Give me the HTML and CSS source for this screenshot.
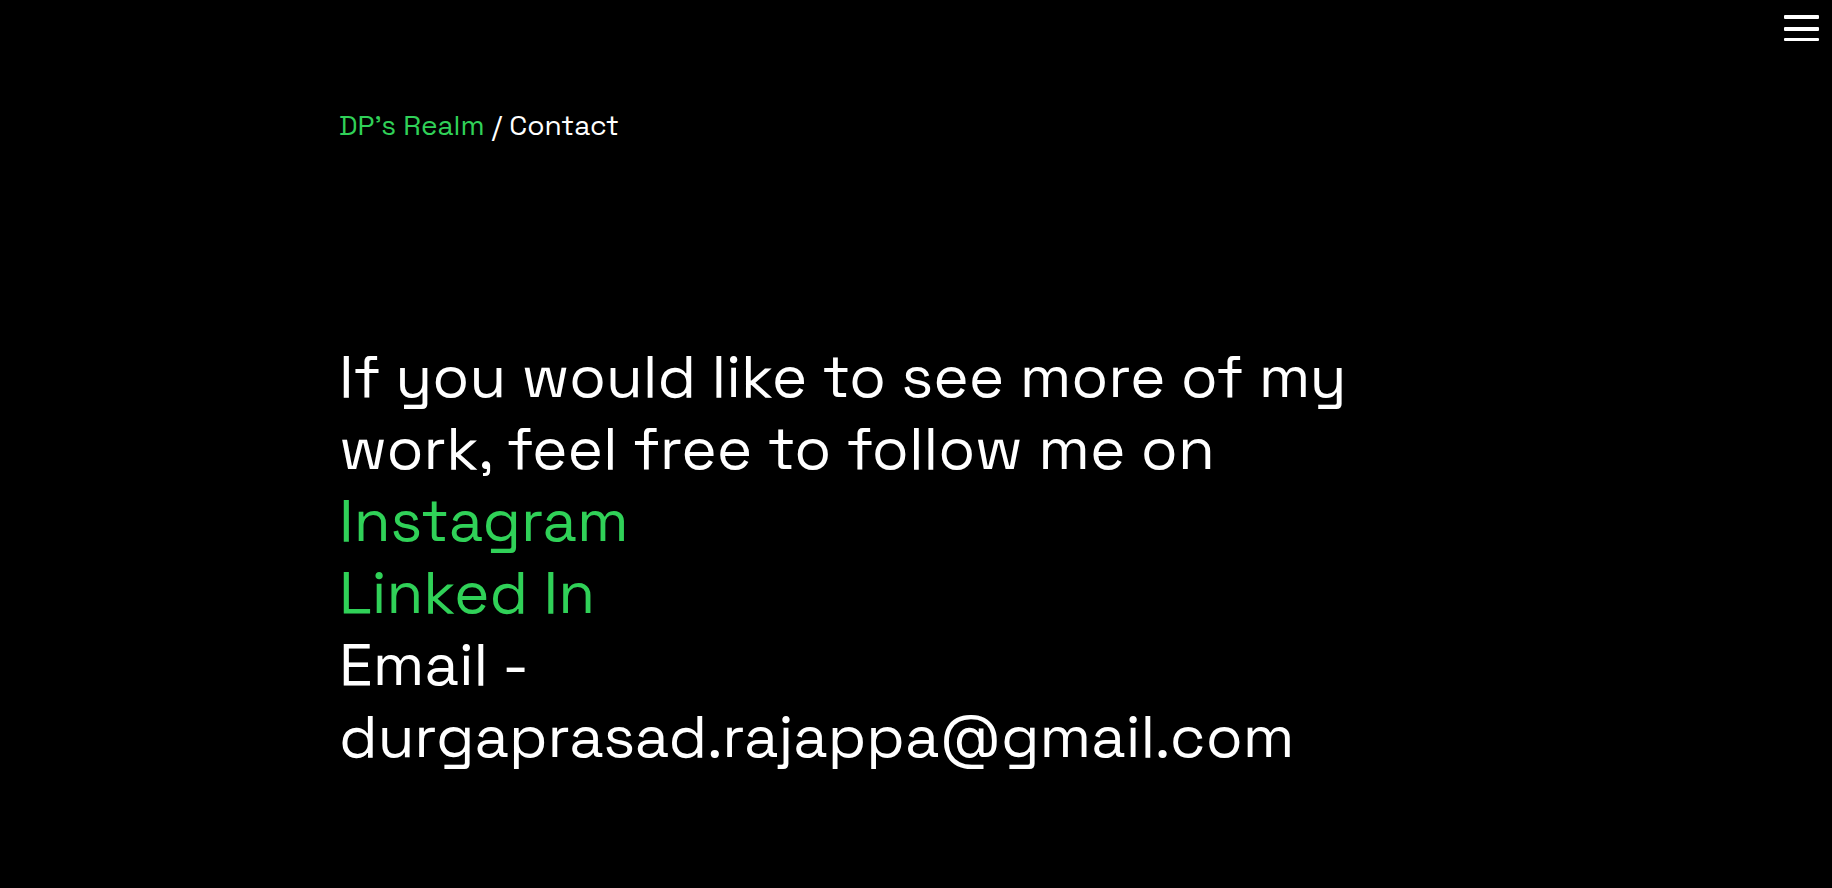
FILE: index.html
```html
<!DOCTYPE html>
<html lang="en">
<head>
<meta charset="utf-8">
<meta name="viewport" content="width=device-width, initial-scale=1">
<title>Contact</title>
<link rel="stylesheet" href="styles.css">
</head>
<body>
<header class="topbar">
  <button class="menu-button" type="button" aria-label="Open menu">
    <span class="menu-bar"></span>
    <span class="menu-bar"></span>
    <span class="menu-bar"></span>
  </button>
</header>
<main class="page">
  <nav class="breadcrumb" aria-label="Breadcrumb"><a class="link" href="#">DP’s Realm</a> / Contact</nav>
  <p class="message">If you would like to see more of my<br>work, feel free to follow me on<br><a class="link" href="#">Instagram</a><br><a class="link" href="#">Linked In</a><br>Email -<br>durgaprasad.rajappa@gmail.com</p>
</main>
</body>
</html>
```
FILE: styles.css
```css
body {
  margin: 0;
  background: #000;
  color: #fff;
  font-family: "Space Grotesk", Inter, "Liberation Sans", sans-serif;
}

.topbar {
  display: flex;
  justify-content: flex-end;
  padding: 15px 13px 0;
}

.menu-button {
  display: flex;
  flex-direction: column;
  justify-content: space-between;
  width: 35px;
  height: 26px;
  padding: 0;
  border: 0;
  background: none;
  cursor: pointer;
}

.menu-bar {
  width: 100%;
  height: 4px;
  border-radius: 1px;
  background: #fff;
}

.menu-bar:last-child {
  height: 3px;
}

.page {
  max-width: 1154px;
  margin: 0 auto;
  padding-top: 67px;
}

.breadcrumb {
  font-size: 28px;
  line-height: 34px;
}

.message {
  margin: 199px 0 0;
  font-size: 60px;
  line-height: 72px;
}

.link {
  color: #30d158;
  text-decoration: none;
}
```
